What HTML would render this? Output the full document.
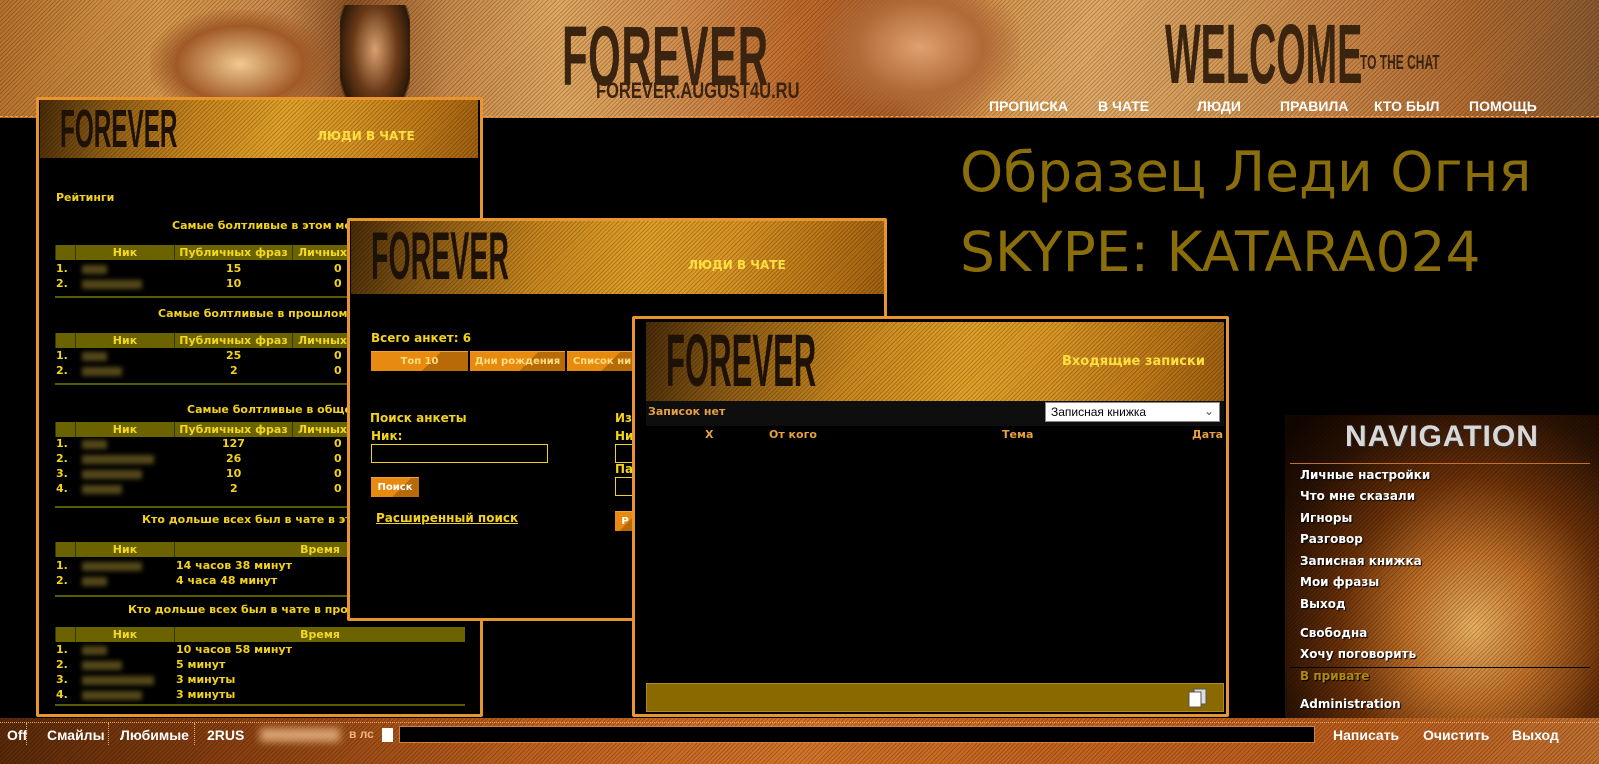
<!DOCTYPE html>
<html><head><meta charset="utf-8"><style>
*{margin:0;padding:0;box-sizing:border-box}
body{width:1599px;height:764px;background:#000;overflow:hidden;position:relative;font-family:"DejaVu Sans","Liberation Sans",sans-serif;font-weight:bold;font-size:11px;color:#f2d21a}
.a{position:absolute;white-space:nowrap}
.hdr{position:absolute;left:0;top:0;width:1599px;height:118px;
background:linear-gradient(90deg,#b8732e 0%,#d99a4c 10%,#c9884a 18%,#8a4f22 22%,#c98a4a 28%,#e0a860 35%,#d49050 42%,#c06a2a 50%,#a85a26 56%,#d8964e 62%,#e0aa66 68%,#d49a58 76%,#c88446 84%,#b06a30 92%,#8a5a30 100%);}
.hatch{position:absolute;inset:0;background:repeating-linear-gradient(135deg,rgba(0,0,0,.22) 0 1px,transparent 1px 3px)}
.logo{font-family:"Liberation Sans Narrow","Liberation Sans",sans-serif;color:#3a2410;font-weight:bold;transform:scaleX(.5);transform-origin:left top}
.nav{color:#fff;font-family:"Liberation Sans Narrow","Liberation Sans",sans-serif;font-size:14px;font-weight:bold;top:98px}
.win{position:absolute;border:3px solid #e8952e;background:#000;border-radius:2px}
.wh{position:absolute;background:linear-gradient(100deg,#4a2c08 0%,#8a5a14 15%,#c8861e 35%,#e0a028 55%,#d89424 70%,#c07a18 85%,#a06010 100%)}
.th{position:absolute;height:15px;background:#6b6200;border-left:1px solid #2c3a10;color:#f5d820;text-align:center;line-height:15px}
.line{position:absolute;height:2px;background:#5a5a00;left:55px;width:410px}
.blur{position:absolute;height:9px;background:#6a5a20;filter:blur(2.5px);opacity:.8}
.btn{position:absolute;height:20px;background:linear-gradient(135deg,#e88a10 60%,#b86a08 60%);color:#ffe080;text-align:center;line-height:20px;font-size:10px;border-top:1px solid #f0a040}
.big{position:absolute;color:#8a6e0c;font-family:"DejaVu Sans","Liberation Sans",sans-serif;font-weight:normal;font-size:55px;left:960px}
.nl{position:absolute;left:1300px;color:#fff;font-size:12px;text-shadow:1px 1px 1px #000}
.bb{position:absolute;top:718px;left:0;width:1599px;height:46px;background:linear-gradient(90deg,#5a2a08 0%,#8a4010 15%,#c26420 35%,#d2742a 50%,#c4641e 65%,#b85c1c 85%,#c07030 100%)}
.bi{position:absolute;top:727px;color:#fff;font-family:"Liberation Sans Narrow","Liberation Sans",sans-serif;font-size:14px;font-weight:bold}
</style></head><body>

<div class="hdr"><div class="hatch"></div>
<div class="a" style="left:340px;top:5px;width:70px;height:112px;background:radial-gradient(ellipse at 50% 40%,#d8a070 0%,#6a3a18 45%,#2a1808 75%,transparent 80%)"></div>
<div class="a" style="left:150px;top:10px;width:180px;height:108px;background:radial-gradient(ellipse at 50% 50%,#f0c890 0%,#a05a28 50%,transparent 75%)"></div>
<div class="a" style="left:820px;top:0;width:200px;height:118px;background:radial-gradient(ellipse at 50% 40%,#e0a070 0%,#b06a38 45%,transparent 75%)"></div>
<div class="a logo" style="left:562px;top:8px;font-size:84px;letter-spacing:1px">FOREVER</div>
<div class="a logo" style="left:596px;top:78px;font-size:22px;transform:scaleX(.75)">FOREVER.AUGUST4U.RU</div>
<div class="a logo" style="left:1165px;top:6px;font-size:84px;transform:scaleX(.45)">WELCOME</div>
<div class="a logo" style="left:1360px;top:52px;font-size:20px;transform:scaleX(.6)">TO THE CHAT</div>
<div class="a" style="left:0;top:116px;width:1599px;height:2px;border-top:1px dashed #f0a040"></div>
<div class="a nav" style="left:989px">ПРОПИСКА</div>
<div class="a nav" style="left:1098px">В ЧАТЕ</div>
<div class="a nav" style="left:1197px">ЛЮДИ</div>
<div class="a nav" style="left:1280px">ПРАВИЛА</div>
<div class="a nav" style="left:1374px">КТО БЫЛ</div>
<div class="a nav" style="left:1469px">ПОМОЩЬ</div>
</div>

<div class="big" style="top:140px">Образец Леди Огня</div>
<div class="big" style="top:220px">SKYPE: KATARA024</div>

<!-- Window 1 -->
<div class="win" style="left:36px;top:97px;width:447px;height:620px">
<div class="wh" style="left:1px;top:0;width:438px;height:58px"><div class="hatch"></div>
<div class="a logo" style="left:20px;top:-2px;font-size:54px;color:#1e1206;transform:scaleX(.45)">FOREVER</div>
<div class="a" style="left:277px;top:29px;color:#ffe040;font-size:12px">ЛЮДИ В ЧАТЕ</div></div>
</div>
<div class="a" style="left:56px;top:191px">Рейтинги</div>

<div class="a" style="left:172px;top:219px">Самые болтливые в этом месяце</div>
<div class="th" style="left:55px;top:245px;width:20px"></div><div class="th" style="left:75px;top:245px;width:99px">Ник</div><div class="th" style="left:174px;top:245px;width:118px">Публичных фраз</div><div class="th" style="left:292px;top:245px;width:60px">Личных</div>
<div class="a" style="left:56px;top:262px">1.</div><div class="blur" style="left:82px;top:265px;width:25px"></div><div class="a" style="left:226px;top:262px">15</div><div class="a" style="left:334px;top:262px">0</div>
<div class="a" style="left:56px;top:277px">2.</div><div class="blur" style="left:82px;top:280px;width:60px"></div><div class="a" style="left:226px;top:277px">10</div><div class="a" style="left:334px;top:277px">0</div>
<div class="line" style="top:296px"></div>

<div class="a" style="left:158px;top:307px">Самые болтливые в прошлом месяце</div>
<div class="th" style="left:55px;top:333px;width:20px"></div><div class="th" style="left:75px;top:333px;width:99px">Ник</div><div class="th" style="left:174px;top:333px;width:118px">Публичных фраз</div><div class="th" style="left:292px;top:333px;width:60px">Личных</div>
<div class="a" style="left:56px;top:349px">1.</div><div class="blur" style="left:82px;top:352px;width:25px"></div><div class="a" style="left:226px;top:349px">25</div><div class="a" style="left:334px;top:349px">0</div>
<div class="a" style="left:56px;top:364px">2.</div><div class="blur" style="left:82px;top:367px;width:40px"></div><div class="a" style="left:230px;top:364px">2</div><div class="a" style="left:334px;top:364px">0</div>
<div class="line" style="top:383px"></div>

<div class="a" style="left:187px;top:403px">Самые болтливые в общем</div>
<div class="th" style="left:55px;top:422px;width:20px"></div><div class="th" style="left:75px;top:422px;width:99px">Ник</div><div class="th" style="left:174px;top:422px;width:118px">Публичных фраз</div><div class="th" style="left:292px;top:422px;width:60px">Личных</div>
<div class="a" style="left:56px;top:437px">1.</div><div class="blur" style="left:82px;top:440px;width:25px"></div><div class="a" style="left:222px;top:437px">127</div><div class="a" style="left:334px;top:437px">0</div>
<div class="a" style="left:56px;top:452px">2.</div><div class="blur" style="left:82px;top:455px;width:72px"></div><div class="a" style="left:226px;top:452px">26</div><div class="a" style="left:334px;top:452px">0</div>
<div class="a" style="left:56px;top:467px">3.</div><div class="blur" style="left:82px;top:470px;width:60px"></div><div class="a" style="left:226px;top:467px">10</div><div class="a" style="left:334px;top:467px">0</div>
<div class="a" style="left:56px;top:482px">4.</div><div class="blur" style="left:82px;top:485px;width:40px"></div><div class="a" style="left:230px;top:482px">2</div><div class="a" style="left:334px;top:482px">0</div>
<div class="line" style="top:506px"></div>

<div class="a" style="left:142px;top:513px">Кто дольше всех был в чате в этом месяце</div>
<div class="th" style="left:55px;top:542px;width:20px"></div><div class="th" style="left:75px;top:542px;width:99px">Ник</div><div class="th" style="left:174px;top:542px;width:291px">Время</div>
<div class="a" style="left:56px;top:559px">1.</div><div class="blur" style="left:82px;top:562px;width:60px"></div><div class="a" style="left:176px;top:559px">14 часов 38 минут</div>
<div class="a" style="left:56px;top:574px">2.</div><div class="blur" style="left:82px;top:577px;width:25px"></div><div class="a" style="left:176px;top:574px">4 часа 48 минут</div>
<div class="line" style="top:595px"></div>

<div class="a" style="left:128px;top:603px">Кто дольше всех был в чате в прошлом месяце</div>
<div class="th" style="left:55px;top:627px;width:20px"></div><div class="th" style="left:75px;top:627px;width:99px">Ник</div><div class="th" style="left:174px;top:627px;width:291px">Время</div>
<div class="a" style="left:56px;top:643px">1.</div><div class="blur" style="left:82px;top:646px;width:25px"></div><div class="a" style="left:176px;top:643px">10 часов 58 минут</div>
<div class="a" style="left:56px;top:658px">2.</div><div class="blur" style="left:82px;top:661px;width:40px"></div><div class="a" style="left:176px;top:658px">5 минут</div>
<div class="a" style="left:56px;top:673px">3.</div><div class="blur" style="left:82px;top:676px;width:72px"></div><div class="a" style="left:176px;top:673px">3 минуты</div>
<div class="a" style="left:56px;top:688px">4.</div><div class="blur" style="left:82px;top:691px;width:60px"></div><div class="a" style="left:176px;top:688px">3 минуты</div>
<div class="line" style="top:704px"></div>

<!-- Window 2 -->
<div class="win" style="left:347px;top:218px;width:540px;height:403px">
<div class="wh" style="left:1px;top:0;width:533px;height:73px"><div class="hatch"></div>
<div class="a logo" style="left:20px;top:-4px;font-size:68px;color:#1e1206;transform:scaleX(.42)">FOREVER</div>
<div class="a" style="left:337px;top:37px;color:#ffe040;font-size:12px">ЛЮДИ В ЧАТЕ</div></div>
</div>
<div class="a" style="left:371px;top:331px;font-size:12px">Всего анкет: 6</div>
<div class="btn" style="left:371px;top:351px;width:97px">Топ 10</div>
<div class="btn" style="left:470px;top:351px;width:95px">Дни рождения</div>
<div class="btn" style="left:567px;top:351px;width:70px">Список ни</div>
<div class="a" style="left:370px;top:411px;font-size:12px">Поиск анкеты</div>
<div class="a" style="left:371px;top:429px;font-size:12px">Ник:</div>
<div class="a" style="left:371px;top:444px;width:177px;height:19px;border:1px solid #f2d21a"></div>
<div class="btn" style="left:371px;top:477px;width:48px;color:#fff">Поиск</div>
<div class="a" style="left:376px;top:511px;font-size:12px;text-decoration:underline">Расширенный поиск</div>
<div class="a" style="left:615px;top:411px;font-size:12px">Из</div>
<div class="a" style="left:615px;top:429px;font-size:12px">Ни</div>
<div class="a" style="left:615px;top:444px;width:20px;height:19px;border:1px solid #f2d21a"></div>
<div class="a" style="left:615px;top:462px;font-size:12px">Па</div>
<div class="a" style="left:615px;top:477px;width:20px;height:19px;border:1px solid #f2d21a"></div>
<div class="btn" style="left:615px;top:511px;width:20px;color:#fff">Р</div>

<!-- Window 3 -->
<div class="win" style="left:632px;top:316px;width:597px;height:401px">
<div class="wh" style="left:11px;top:3px;width:578px;height:79px"><div class="hatch"></div>
<div class="a logo" style="left:20px;top:-4px;font-size:74px;color:#1e1206;transform:scaleX(.42)">FOREVER</div>
<div class="a" style="left:416px;top:32px;color:#ffe040;font-size:13px">Входящие записки</div></div>
<div class="a" style="left:11px;top:82px;width:578px;height:25px;background:#0e0e0e"></div>
<div class="a" style="left:11px;top:364px;width:578px;height:29px;background:#8a6a00;border:1px solid #b08a20"></div>
</div>
<div class="a" style="left:648px;top:405px;color:#e8a040">Записок нет</div>
<div class="a" style="left:1045px;top:402px;width:175px;height:20px;background:#fff;border:1px solid #888;color:#000;font-weight:normal;font-size:12px;padding:2px 5px;font-family:'Liberation Sans',sans-serif">Записная книжка<span style="position:absolute;right:5px;top:1px;color:#555">⌄</span></div>
<div class="a" style="left:705px;top:428px;color:#e8a040">Х</div>
<div class="a" style="left:769px;top:428px;color:#e8a040">От кого</div>
<div class="a" style="left:1002px;top:428px;color:#e8a040">Тема</div>
<div class="a" style="left:1192px;top:428px;color:#e8a040">Дата</div>
<svg class="a" style="left:1188px;top:688px" width="24" height="20"><rect x="6" y="1" width="12" height="15" fill="#ddd" stroke="#555"/><rect x="1" y="4" width="12" height="15" fill="#fff" stroke="#555"/></svg>

<!-- Nav panel -->
<div class="a" style="left:1285px;top:415px;width:314px;height:303px;background:radial-gradient(ellipse at 60% 70%,#e8b060 0%,#c07028 25%,#6a3008 50%,#2a1204 75%,#120600 95%)"><div class="hatch"></div></div>
<div class="a" style="left:1345px;top:420px;color:#d8d8d8;font-family:'Liberation Sans Narrow','Liberation Sans',sans-serif;font-size:30px;font-weight:bold;letter-spacing:1px;text-shadow:1px 1px 0 #333">NAVIGATION</div>
<div class="a" style="left:1290px;top:463px;width:300px;height:1px;background:#c07030"></div>
<div class="nl" style="top:468px">Личные настройки</div>
<div class="nl" style="top:489px">Что мне сказали</div>
<div class="nl" style="top:511px">Игноры</div>
<div class="nl" style="top:532px">Разговор</div>
<div class="nl" style="top:554px">Записная книжка</div>
<div class="nl" style="top:575px">Мои фразы</div>
<div class="nl" style="top:597px">Выход</div>
<div class="nl" style="top:626px">Свободна</div>
<div class="nl" style="top:647px">Хочу поговорить</div>
<div class="a" style="left:1290px;top:667px;width:300px;height:1px;background:#000"></div>
<div class="nl" style="top:669px;color:#b08a10">В привате</div>
<div class="nl" style="top:697px">Administration</div>

<!-- Bottom bar -->
<div class="bb"><div class="hatch"></div></div>
<div class="a" style="left:0;top:722px;width:1599px;height:1px;border-top:1px dotted #f0a060"></div>
<div class="bi" style="left:7px">Off</div>
<div class="a" style="left:26px;top:723px;height:22px;border-left:1px dotted #f0a060"></div>
<div class="bi" style="left:47px">Смайлы</div>
<div class="a" style="left:108px;top:723px;height:22px;border-left:1px dotted #f0a060"></div>
<div class="bi" style="left:120px">Любимые</div>
<div class="a" style="left:194px;top:723px;height:22px;border-left:1px dotted #f0a060"></div>
<div class="bi" style="left:207px">2RUS</div>
<div class="a" style="left:260px;top:728px;width:80px;height:14px;background:#d8a070;filter:blur(4px)"></div>
<div class="bi" style="left:349px;color:#f0b080;font-size:12px">в лс</div>
<div class="a" style="left:382px;top:728px;width:11px;height:14px;background:#fff"></div>
<div class="a" style="left:399px;top:726px;width:916px;height:17px;background:#000;border:1px solid #d08040"></div>
<div class="bi" style="left:1333px">Написать</div>
<div class="bi" style="left:1423px">Очистить</div>
<div class="bi" style="left:1512px">Выход</div>
</body></html>
